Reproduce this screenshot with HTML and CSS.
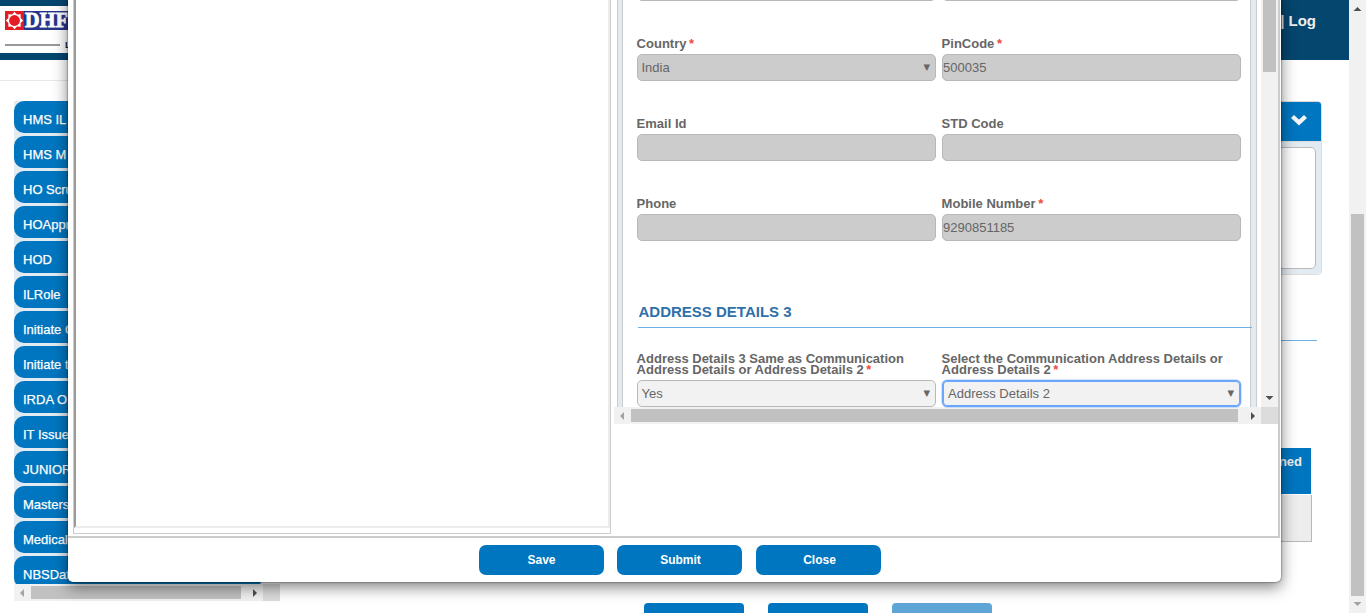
FILE: index.html
```html
<!DOCTYPE html>
<html lang="en">
<head>
<meta charset="utf-8">
<title>DHFL</title>
<link rel="stylesheet" href="styles.css">
</head>
<body>
<div class="viewport">
  <div class="page">
    <header class="topbar">
      <div class="logo">
        <div class="logo-row">
          <svg class="logo-mark" width="19" height="19" viewBox="0 0 19 19">
            <rect width="19" height="19" fill="#e31b23"/>
            <path d="M9.500 .8 12 3.400 15.700 3.300 15.600 7 18.200 9.500 15.600 12 15.700 15.700 12 15.600 9.500 18.200 7 15.600 3.300 15.700 3.400 12 .8 9.500 3.400 7 3.300 3.300 7 3.400Z" fill="#fff"/>
            <circle cx="9.500" cy="9.500" r="5.400" fill="#e31b23"/>
          </svg>
          <span class="logo-name">DHF</span>
        </div>
        <div class="logo-tag"><span class="logo-rule"></span><span>L</span></div>
      </div>
      <div class="user-links">| Log</div>
    </header>
    <div class="divider"></div>
    <div class="columns">
      <div class="sidebar">
        <ul class="roles">
          <li>HMS IL</li><li>HMS M</li><li>HO Scru</li><li>HOAppr</li><li>HOD</li><li>ILRole</li><li>Initiate C</li>
          <li>Initiate t</li><li>IRDA O</li><li>IT Issue</li><li>JUNIOR</li><li>Masters</li><li>Medical</li><li>NBSDat</li>
        </ul>
        <div class="hscroll">
          <svg class="arrow muted" width="17" height="17" viewBox="0 0 17 17"><path d="M10 5v8L6 9Z"/></svg>
          <span class="hthumb side-thumb"></span>
          <svg class="arrow" width="17" height="17" viewBox="0 0 17 17"><path d="M7 5v8l4-4Z"/></svg>
          <span class="corner"></span>
        </div>
      </div>
      <div class="work">
        <section class="panel">
          <div class="panel-head">
            <svg width="18" height="14" viewBox="0 0 18 14"><path d="M2.500 3.500 9 9.500 15.500 3.500" fill="none" stroke="#f5f5f5" stroke-width="4.400"/></svg>
          </div>
          <div class="panel-body"><div class="panel-box"></div></div>
        </section>
        <div class="blue-rule"></div>
        <div class="grid-head">ned</div>
        <div class="grid-cell"></div>
        <div class="page-actions"><span></span><span></span><span class="disabled"></span></div>
      </div>
    </div>
  </div>
  <div class="vscroll">
    <svg class="arrow" width="17" height="17" viewBox="0 0 17 17"><path d="M4.500 11h8L8.500 7Z"/></svg>
    <span class="vthumb page-thumb"></span>
    <svg class="arrow muted" width="17" height="17" viewBox="0 0 17 17"><path d="M4.500 6h8L8.500 10Z"/></svg>
  </div>
  <div class="modal">
    <div class="modal-body">
      <div class="doc"><div class="doc-frame"></div></div>
      <div class="form-pane">
        <div class="form-view">
          <div class="form-wrap">
            <div class="form">
              <div class="row"><div class="field"><div class="input"></div></div><div class="field"><div class="input"></div></div></div>
              <div class="row">
                <div class="field"><label>Country <b>*</b></label><div class="input select">India<i>▼</i></div></div>
                <div class="field"><label>PinCode <b>*</b></label><div class="input">500035</div></div>
              </div>
              <div class="row">
                <div class="field"><label>Email Id</label><div class="input"></div></div>
                <div class="field"><label>STD Code</label><div class="input"></div></div>
              </div>
              <div class="row">
                <div class="field"><label>Phone</label><div class="input"></div></div>
                <div class="field"><label>Mobile Number <b>*</b></label><div class="input">9290851185</div></div>
              </div>
              <h2>ADDRESS DETAILS 3</h2>
              <div class="row last">
                <div class="field"><label>Address Details 3 Same as Communication<br>Address Details or Address Details 2 <b>*</b></label><div class="input select enabled">Yes<i>▼</i></div></div>
                <div class="field"><label>Select the Communication Address Details or<br>Address Details 2 <b>*</b></label><div class="input select enabled focused">Address Details 2<i>▼</i></div></div>
              </div>
            </div>
          </div>
          <div class="vscroll form-vscroll">
            <span class="vthumb form-thumb"></span>
            <svg class="arrow" width="17" height="17" viewBox="0 0 17 17"><path d="M4.500 6h8L8.500 10Z"/></svg>
          </div>
        </div>
        <div class="hscroll">
          <svg class="arrow muted" width="17" height="17" viewBox="0 0 17 17"><path d="M10 5v8L6 9Z"/></svg>
          <span class="hthumb form-hthumb"></span>
          <svg class="arrow" width="17" height="17" viewBox="0 0 17 17"><path d="M8 5v8l4-4Z"/></svg>
          <span class="corner"></span>
        </div>
      </div>
    </div>
    <div class="modal-actions"><button>Save</button><button>Submit</button><button>Close</button></div>
  </div>
</div>
</body>
</html>
```
FILE: styles.css
```css
* { box-sizing: border-box; }
body { margin: 0; background: #fff; font-family: "Liberation Sans", Arial, sans-serif; font-size: 13px; overflow: hidden; }
.viewport { position: relative; display: flex; width: 1366px; height: 613px; overflow: hidden; }
.page { width: 1349px; height: 613px; overflow: hidden; }

.topbar { display: flex; justify-content: space-between; height: 60px; padding: 6px 33px 7px 0; background: #05466f; }
.logo { width: 180px; height: 47px; padding: 5px 0 0 5px; background: #fff; }
.logo-row { display: flex; height: 19px; background: #27348b; width: 85px; }
.logo-name { font: bold 20px/19px "Liberation Serif", serif; color: #fff; -webkit-text-stroke: .9px #fff; letter-spacing: .4px; padding-left: 1px; }
.logo-tag { display: flex; align-items: center; gap: 5px; height: 10px; margin-top: 10px; font: bold 9px/10px "Liberation Sans", sans-serif; color: #222; }
.logo-rule { width: 55px; height: 2px; background: #999; }
.user-links { font: bold 15px/30px "Liberation Sans", sans-serif; color: #eee; white-space: pre; }
.divider { width: 600px; height: 21px; border-bottom: 1px solid #e8e8e8; }

.columns { display: flex; justify-content: space-between; height: 532px; padding: 20px 28px 0 14px; }
.sidebar { width: 266px; }
.roles { display: flex; flex-direction: column; gap: 3px; width: 248px; height: 483px; margin: 0; padding: 0; overflow: hidden; list-style: none; background: #e2ebf2; }
.roles li { flex: none; height: 32px; padding: 3px 9px 0; border-radius: 10px; background: #0076c0; color: #fff; line-height: 31px; -webkit-text-stroke: .25px #fff; }

.hscroll { display: flex; align-items: center; height: 17px; background: #f1f1f1; }
.hthumb { height: 13px; background: #c1c1c1; }
.side-thumb { width: 210px; margin-right: 5px; }
.side-thumb + .arrow { margin-right: auto; }
.corner { align-self: stretch; width: 17px; background: #dcdcdc; }
.arrow { display: block; flex: none; fill: #505050; }
.arrow.muted { fill: #a3a3a3; }
.vscroll { display: flex; flex-direction: column; align-items: center; width: 17px; background: #f1f1f1; }
.vthumb { width: 13px; background: #c1c1c1; }
.page-thumb { height: 382px; margin: 197px 0 0; }

.work { display: flex; flex-direction: column; width: 677px; }
.work > * { flex: none; }
.panel { display: flex; flex-direction: column; height: 174px; margin-right: -1px; border: 1px solid #ddd; border-radius: 4px; overflow: hidden; }
.panel-head { display: flex; flex: none; justify-content: flex-end; align-items: center; height: 39px; padding: 0 13px 3px 0; background: #0076c0; }
.panel-body { flex: 1; padding: 5px; background: #e2ebf2; border-top: 1px solid #ddd; }
.panel-box { height: 100%; border: 1px solid #bbb; border-radius: 5px; background: #fff; }
.blue-rule { height: 1px; margin: 65px 4px 107px 0; background: #6eafe5; }
.grid-head { height: 46px; margin-right: 10px; padding: 6px 9px 0 0; background: #0076c0; color: #eee; font-weight: bold; line-height: 15px; text-align: right; }
.grid-cell { height: 47px; margin: 1px 9px 0 0; border: 1px solid #b8b8b8; border-top: 0; background: #ededed; }
.page-actions { display: flex; gap: 24px; margin-top: 61px; }
.page-actions span { width: 100px; height: 30px; border-radius: 4px; background: #0076c0; }
.page-actions .disabled { background: #5fa5d5; }

/* Modal dialog over the page */
.modal { position: absolute; left: 68px; top: -10px; width: 1213px; height: 592px; border-radius: 5px; background: #fff; box-shadow: 0 5px 15px rgba(0,0,0,.5), 0 0 2px rgba(0,0,0,.75); }
.modal-body { display: flex; gap: 3px; width: 1212px; height: 548px; padding-left: 5px; border: solid #ccc; border-width: 0 2px 2px 0; }
.doc { width: 538px; height: 544px; padding-bottom: 5px; border: 1px solid #ccc; }
.doc-frame { height: 100%; border: 2px solid; border-color: #9a9a9a #ececec #ececec #9a9a9a; }
.form-pane { width: 664px; padding-top: 10px; }
.form-view { display: flex; justify-content: space-between; height: 407px; padding-left: 3px; }
.form-wrap { width: 640px; height: 407px; padding: 0 5px 0 4px; border: solid #ccc; border-width: 0 1px; background: #e2ebf2; }
.form { height: 407px; padding-left: 14px; border: solid #ccc; border-width: 0 1px; background: #fff; }
.row { display: flex; gap: 6px; height: 80px; align-items: flex-end; }
.row:first-child { height: 1px; overflow: hidden; }
.row.last { height: 79px; }
.field { flex: none; width: 299px; }
.field label { display: block; margin: 0 0 5px -.4px; color: #666; font-weight: bold; line-height: 11px; white-space: nowrap; }
.field label b { color: #f04a3c; margin-left: -1px; }
.input { height: 27px; border: 1px solid #b8b8b8; border-radius: 5px; background: #ccc; color: #666; line-height: 25px; }
.select { display: flex; justify-content: space-between; padding: 0 5px 0 3.500px; }
.select i { font: normal 8.500px/24px "DejaVu Sans", sans-serif; }
.enabled { background: #f2f2f2; }
.focused { border-color: #6ba6fb; box-shadow: inset 0 0 0 1px #6ba6fb, 0 0 0 .5px #a5c8fb; padding: 0 6px 0 5px; }
.form h2 { width: 614px; height: 87px; margin: 0 0 0 1px; padding: 61px 0 0 .5px; border-bottom: 1px solid #6eafe5; color: #2e70aa; font-size: 15px; line-height: 20px; }
.form-thumb { height: 72px; margin-bottom: auto; }
.form-hthumb { width: 607px; margin-right: 5px; }
.form-hthumb + .arrow { margin-right: auto; }
.modal-actions { display: flex; gap: 13px; padding: 7px 0 0 411px; }
.modal-actions button { width: 125px; height: 30px; padding: 0; border: 0; border-radius: 7px; background: #0076c0; color: #fff; font: bold 12px/30px "Liberation Sans", sans-serif; }
.modal-actions button + button { padding-left: 2px; }
.modal-actions button:last-child { margin-left: 1px; }
```
